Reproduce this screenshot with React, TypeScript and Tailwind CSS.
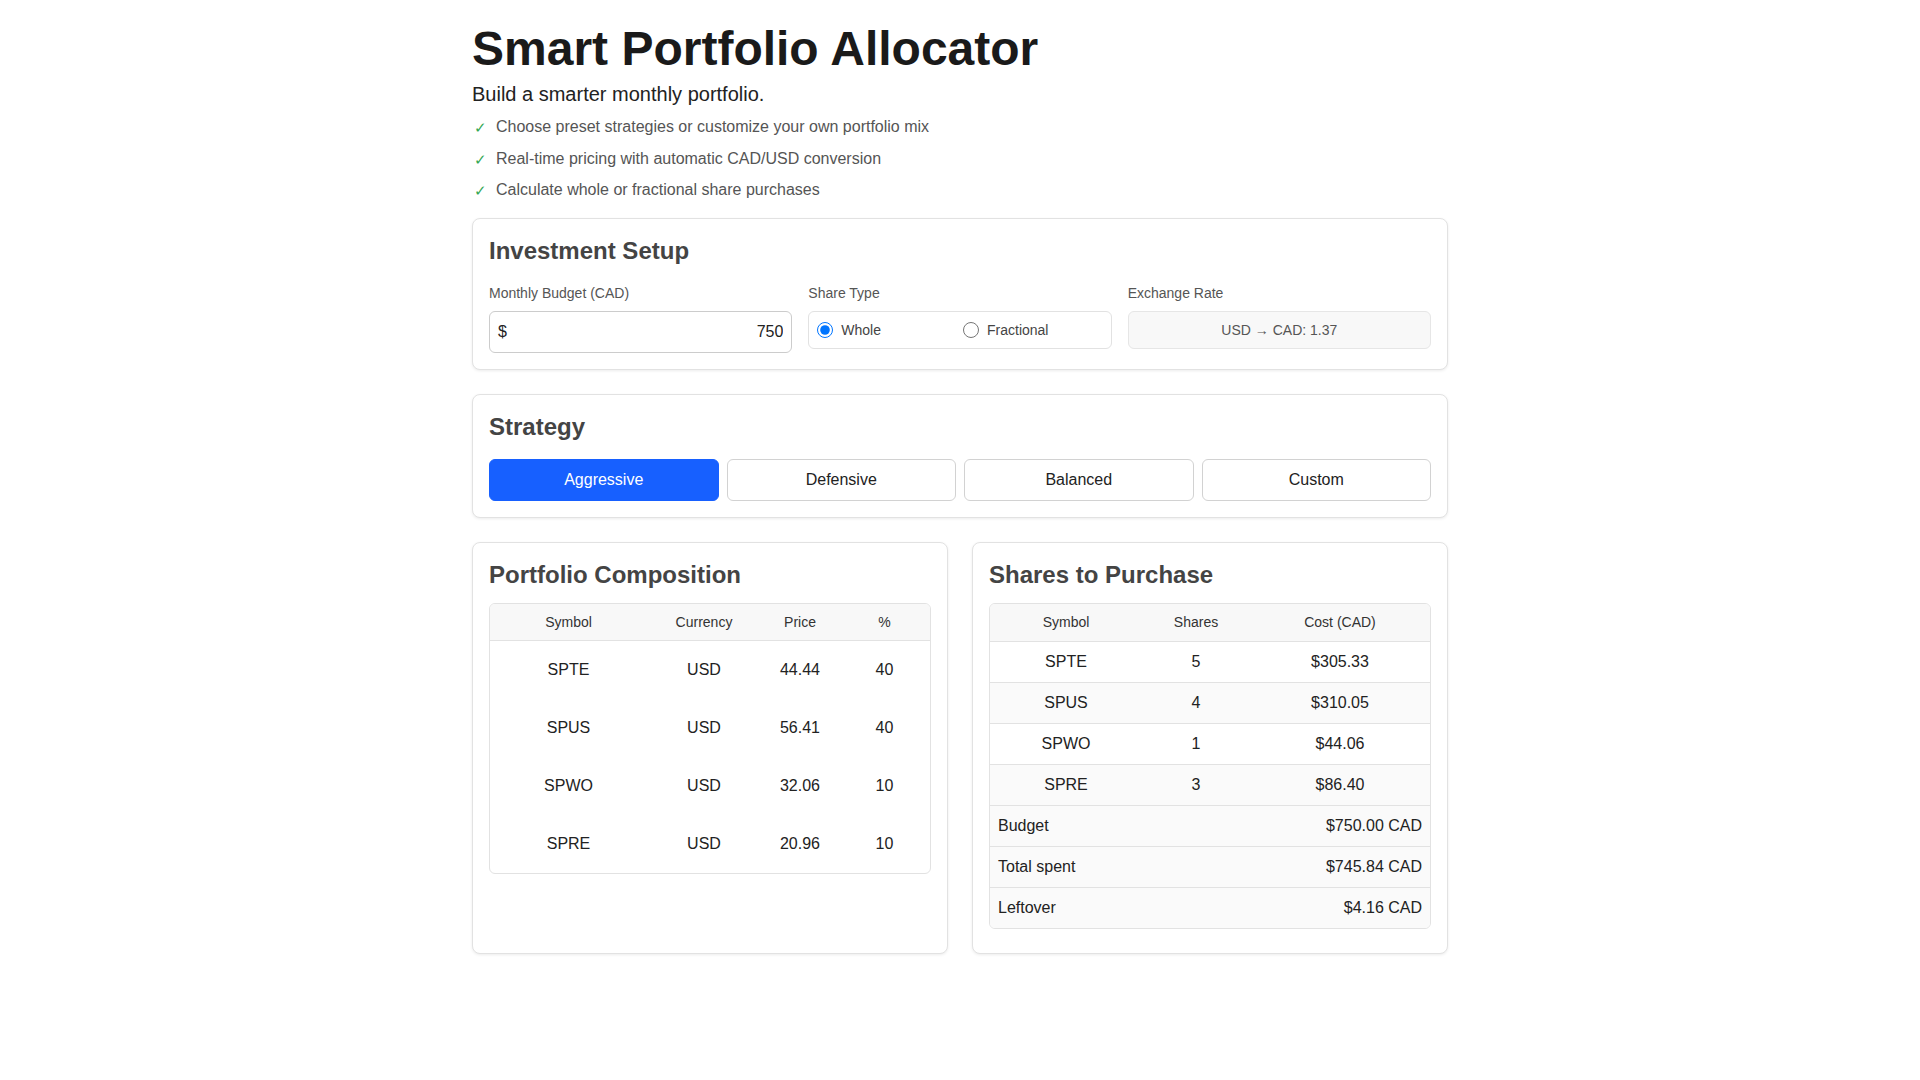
const features = [
  "Choose preset strategies or customize your own portfolio mix",
  "Real-time pricing with automatic CAD/USD conversion",
  "Calculate whole or fractional share purchases",
];

const composition = [
  { symbol: "SPTE", currency: "USD", price: "44.44", pct: "40" },
  { symbol: "SPUS", currency: "USD", price: "56.41", pct: "40" },
  { symbol: "SPWO", currency: "USD", price: "32.06", pct: "10" },
  { symbol: "SPRE", currency: "USD", price: "20.96", pct: "10" },
];

const purchases = [
  { symbol: "SPTE", shares: 5, cost: "$305.33" },
  { symbol: "SPUS", shares: 4, cost: "$310.05" },
  { symbol: "SPWO", shares: 1, cost: "$44.06" },
  { symbol: "SPRE", shares: 3, cost: "$86.40" },
];

const totals = [
  { label: "Budget", value: "$750.00 CAD" },
  { label: "Total spent", value: "$745.84 CAD" },
  { label: "Leftover", value: "$4.16 CAD" },
];

const strategies = ["Aggressive", "Defensive", "Balanced", "Custom"];

function Card({ title, children, className = "" }: any) {
  return (
    <div
      className={
        "bg-white border border-[#e2e2e2] rounded-lg shadow-[0_1px_3px_rgba(0,0,0,0.08)] p-4 " +
        className
      }
    >
      <h2 className="text-[24px] leading-8 font-bold text-[#444]">{title}</h2>
      {children}
    </div>
  );
}

export default function App() {
  return (
    <div className="min-h-screen bg-white font-['Liberation_Sans',Arial,sans-serif]">
      <div className="max-w-[976px] mx-auto pt-5 pb-10">
        <h1 className="text-[48px] leading-[1.2] font-bold text-[#1a1a1a]">
          Smart Portfolio Allocator
        </h1>
        <p className="mt-1 text-[20px] leading-6 text-[#222]">
          Build a smarter monthly portfolio.
        </p>
        <ul className="mt-1.5 mb-3">
          {features.map((f) => (
            <li key={f} className="h-[31.5px] flex items-center text-[16px] text-[#555]">
              <span className="w-6 pl-0.5 pt-0.5 text-[15px] text-[#34a853]">✓</span>
              {f}
            </li>
          ))}
        </ul>

        <Card title="Investment Setup">
          <div className="mt-4 grid grid-cols-3 gap-4 items-start">
            <div>
              <label className="block text-[14px] leading-5 text-[#555] mb-2">
                Monthly Budget (CAD)
              </label>
              <div className="h-[42px] flex items-center border border-[#ccc] rounded-md px-2 text-[16px] text-[#222]">
                <span>$</span>
                <input
                  defaultValue="750"
                  className="flex-1 min-w-0 text-right outline-none bg-transparent"
                />
              </div>
            </div>
            <div>
              <label className="block text-[14px] leading-5 text-[#555] mb-2">Share Type</label>
              <div className="h-[38px] flex items-center border border-[#e2e2e2] rounded-md px-2 text-[14px] text-[#444]">
                <label className="flex-1 flex items-center gap-2">
                  <input type="radio" name="shareType" defaultChecked className="w-4 h-4" />
                  Whole
                </label>
                <label className="flex-1 flex items-center gap-2 pl-1.5">
                  <input type="radio" name="shareType" className="w-4 h-4" />
                  Fractional
                </label>
              </div>
            </div>
            <div>
              <label className="block text-[14px] leading-5 text-[#555] mb-2">Exchange Rate</label>
              <div className="h-[38px] flex items-center justify-center border border-[#e6e6e6] bg-[#f8f8f8] rounded-md text-[14px] text-[#555]">
                USD → CAD: 1.37
              </div>
            </div>
          </div>
        </Card>

        <Card title="Strategy" className="mt-6">
          <div className="mt-4 grid grid-cols-4 gap-2">
            {strategies.map((s, i) => (
              <button
                key={s}
                className={
                  i === 0
                    ? "h-[42px] rounded-md bg-[#1760ff] border border-[#1760ff] text-white text-[16px]"
                    : "h-[42px] rounded-md bg-white border border-[#d2d2d2] text-[#222] text-[16px]"
                }
              >
                {s}
              </button>
            ))}
          </div>
        </Card>

        <div className="mt-6 grid grid-cols-2 gap-6">
          <Card title="Portfolio Composition">
            <div className="mt-3 border border-[#e2e2e2] rounded-md overflow-hidden">
              <div className="grid grid-cols-[157px_114px_78px_1fr] h-[37px] items-center bg-[#f8f8f8] border-b border-[#e2e2e2] text-[14px] text-[#333] text-center">
                <div>Symbol</div>
                <div>Currency</div>
                <div>Price</div>
                <div>%</div>
              </div>
              {composition.map((r) => (
                <div
                  key={r.symbol}
                  className="grid grid-cols-[157px_114px_78px_1fr] h-[58px] items-center text-[16px] text-[#222] text-center"
                >
                  <div>{r.symbol}</div>
                  <div>{r.currency}</div>
                  <div>{r.price}</div>
                  <div>{r.pct}</div>
                </div>
              ))}
            </div>
          </Card>

          <Card title="Shares to Purchase">
            <div className="mt-3 mb-2 border border-[#e2e2e2] rounded-md overflow-hidden">
              <div className="grid grid-cols-[152px_108px_1fr] h-[37px] items-center bg-[#f8f8f8] text-[14px] text-[#333] text-center">
                <div>Symbol</div>
                <div>Shares</div>
                <div>Cost (CAD)</div>
              </div>
              {purchases.map((r, i) => (
                <div
                  key={r.symbol}
                  className={
                    "grid grid-cols-[152px_108px_1fr] h-[41px] items-center border-t border-[#e2e2e2] text-[16px] text-[#222] text-center " +
                    (i % 2 === 1 ? "bg-[#fafafa]" : "bg-white")
                  }
                >
                  <div>{r.symbol}</div>
                  <div>{r.shares}</div>
                  <div>{r.cost}</div>
                </div>
              ))}
              {totals.map((t) => (
                <div
                  key={t.label}
                  className="flex justify-between items-center h-[41px] px-2 border-t border-[#e2e2e2] bg-[#fafafa] text-[16px] text-[#222]"
                >
                  <span>{t.label}</span>
                  <span>{t.value}</span>
                </div>
              ))}
            </div>
          </Card>
        </div>
      </div>
    </div>
  );
}
